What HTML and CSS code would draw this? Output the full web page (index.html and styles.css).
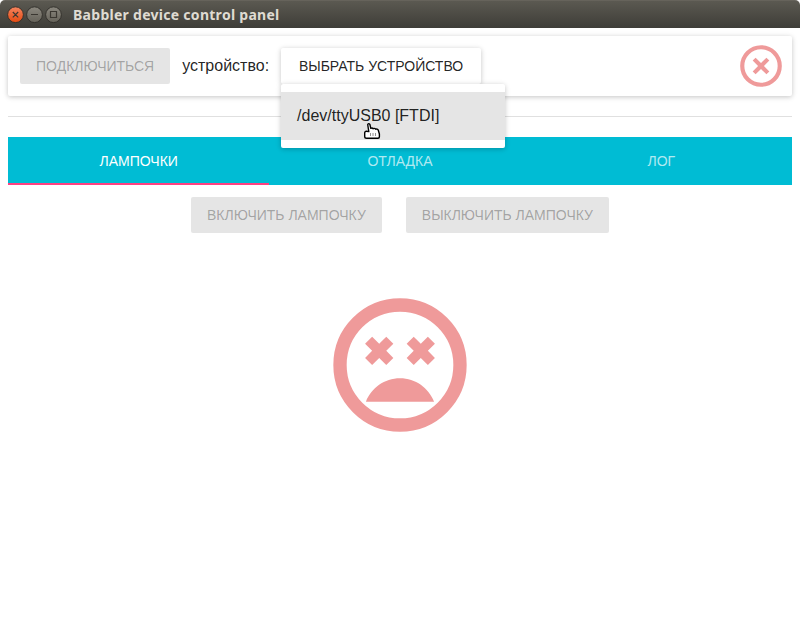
FILE: index.html
```html
<!DOCTYPE html>
<html lang="ru">
<head>
<meta charset="utf-8">
<title>Babbler device control panel</title>
<link rel="stylesheet" href="styles.css">
</head>
<body>
<header class="titlebar">
  <svg class="window-controls" width="58" height="18" viewBox="0 0 58 18">
    <defs>
      <linearGradient id="close" x2="0" y2="1"><stop stop-color="#f58560"/><stop offset="1" stop-color="#e4490f"/></linearGradient>
      <linearGradient id="plain" x2="0" y2="1"><stop stop-color="#8b887f"/><stop offset="1" stop-color="#656259"/></linearGradient>
    </defs>
    <g stroke="#33312c">
      <circle cx="9.5" cy="8.7" r="7.9" fill="url(#close)"/>
      <circle cx="28.5" cy="8.7" r="7.9" fill="url(#plain)"/>
      <circle cx="47.5" cy="8.7" r="7.9" fill="url(#plain)"/>
    </g>
    <path d="M6.8 6l5.4 5.4M12.2 6l-5.4 5.4M25 8.5h7M44.5 5.5h6v6h-6z" fill="none" stroke="#3a3731" stroke-width="1.2"/>
  </svg>
  <h1 class="window-title">Babbler device control panel</h1>
</header>
<main class="content">
  <section class="toolbar">
    <button class="button" disabled>ПОДКЛЮЧИТЬСЯ</button>
    <span class="label">устройство:</span>
    <div class="picker">
      <button class="picker-button">ВЫБРАТЬ УСТРОЙСТВО</button>
      <div class="menu">
        <div class="menu-item">/dev/ttyUSB0 [FTDI]</div>
        <svg class="pointer" width="18" height="18" viewBox="0 0 18 18">
          <path d="M4.700 2.500Q5.700.800 6.900 2.500L7.800 6.300Q9.200 5.400 10.200 6.700 11.700 5.900 12.800 7.200 14.500 6.700 15.300 8.200L16.400 12V14.800Q16.400 16.300 15 16.300H3.500Q1.700 16.300 1.700 14.500V11Q1.700 9.200 3.500 9.300L5.800 9.600z" fill="#fff" stroke="#000" stroke-width="1.400" stroke-linejoin="round"/>
          <path d="M7.500 11v3M10 11v3M12.500 11v3" stroke="#777" stroke-width=".8"/>
        </svg>
      </div>
    </div>
    <svg class="status" width="50" height="50" viewBox="0 0 24 24">
      <circle class="ring" cx="12" cy="12" r="9"/>
      <path d="M14.590 8L12 10.590 9.410 8 8 9.410 10.590 12 8 14.590 9.410 16 12 13.410 14.590 16 16 14.590 13.410 12 16 9.410z"/>
    </svg>
  </section>
  <hr class="divider">
  <nav class="tabs">
    <div class="tab tab-active">ЛАМПОЧКИ</div>
    <div class="tab">ОТЛАДКА</div>
    <div class="tab">ЛОГ</div>
  </nav>
  <div class="actions">
    <button class="button" disabled>ВКЛЮЧИТЬ ЛАМПОЧКУ</button>
    <button class="button" disabled>ВЫКЛЮЧИТЬ ЛАМПОЧКУ</button>
  </div>
  <svg class="face" width="160" height="160" viewBox="0 0 24 24">
    <circle class="ring" cx="12" cy="12" r="9"/>
    <path d="M16.180 7.760L15.120 8.820 14.060 7.760 13 8.820 14.060 9.880 13 10.940 14.060 12 15.120 10.940 16.180 12 17.240 10.940 16.180 9.880 17.240 8.820zM7.820 12L8.880 10.940 9.940 12 11 10.940 9.940 9.880 11 8.820 9.940 7.760 8.880 8.820 7.820 7.760 6.760 8.820 7.820 9.880 6.760 10.940zM12 14C9.670 14 7.690 15.460 6.890 17.500H17.110C16.310 15.460 14.330 14 12 14z"/>
  </svg>
</main>
</body>
</html>
```
FILE: styles.css
```css
* {
  box-sizing: border-box;
}

body {
  margin: 0;
  background: #fff;
  color: rgba(0, 0, 0, 0.87);
  font: 16px "Liberation Sans", Arial, sans-serif;
}

.titlebar {
  display: flex;
  align-items: center;
  height: 28px;
  padding-left: 6px;
  background: linear-gradient(#5b5951, #3e3d38);
  border-top: 1px solid #66635b;
  border-radius: 5px 5px 0 0;
}

.window-title {
  margin: 0 0 0 9px;
  color: #dfdbd2;
  font: bold 14px "Noto Sans", sans-serif;
  letter-spacing: 0.28px;
  white-space: nowrap;
}

.content {
  display: flex;
  flex-direction: column;
  padding: 8px;
}

.toolbar {
  display: flex;
  align-items: center;
  height: 60px;
  padding: 0 6px 0 12px;
  border-radius: 2px;
  box-shadow: 0 1px 6px rgba(0, 0, 0, 0.12), 0 1px 4px rgba(0, 0, 0, 0.12);
}

.button,
.picker-button {
  height: 36px;
  padding: 0 16px;
  border: 0;
  border-radius: 2px;
  font: 14px "Liberation Sans", Arial, sans-serif;
  white-space: nowrap;
}

.button {
  background: #e5e5e5;
  color: rgba(0, 0, 0, 0.3);
}

.label {
  margin: 0 12px;
}

.picker {
  position: relative;
}

.picker-button {
  display: block;
  width: 200px;
  background: #fff;
  color: rgba(0, 0, 0, 0.87);
  box-shadow: 0 1px 6px rgba(0, 0, 0, 0.12), 0 1px 4px rgba(0, 0, 0, 0.12);
}

.menu {
  position: absolute;
  top: 36px;
  left: 0;
  width: 224px;
  padding: 8px 0;
  background: #fff;
  border-radius: 2px;
  box-shadow: 0 1px 6px rgba(0, 0, 0, 0.12), 0 1px 4px rgba(0, 0, 0, 0.12);
}

.menu-item {
  height: 48px;
  padding-left: 16px;
  background: #e5e5e5;
  line-height: 48px;
}

.pointer {
  position: absolute;
  top: 38px;
  left: 82px;
}

.status {
  margin-left: auto;
}

.status,
.face {
  fill: #ef9a9a;
}

.ring {
  fill: none;
  stroke: #ef9a9a;
  stroke-width: 2;
}

.divider {
  width: 100%;
  height: 1px;
  margin: 20px 0;
  border: 0;
  background: #e0e0e0;
}

.tabs {
  display: grid;
  grid-template-columns: repeat(3, 1fr);
  height: 48px;
  background: #00bcd4;
}

.tab {
  color: rgba(255, 255, 255, 0.7);
  font-size: 14px;
  line-height: 48px;
  text-align: center;
}

.tab-active {
  color: #fff;
  box-shadow: inset 0 -2px #ff4081;
}

.actions {
  display: flex;
  justify-content: center;
  gap: 24px;
  padding-top: 12px;
}

.face {
  align-self: center;
  margin-top: 52px;
}
```
